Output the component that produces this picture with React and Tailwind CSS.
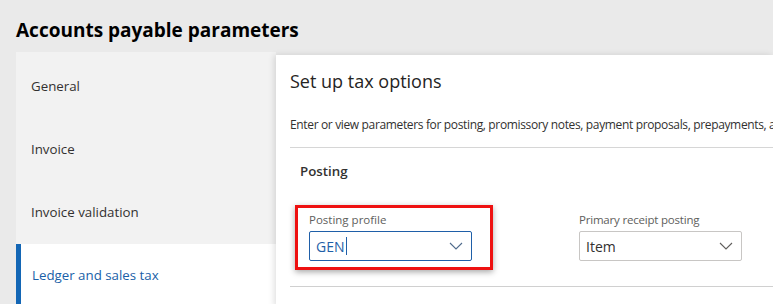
import React from "react";

function Chevron({ className }) {
  return (
    <svg width="14" height="8" viewBox="0 0 14 8" className={className} fill="none">
      <path d="M1 1 L7 7 L13 1" stroke="currentColor" strokeWidth="1.1" />
    </svg>
  );
}

export default function App() {
  const items = ["General", "Invoice", "Invoice validation"];
  return (
    <div className="w-[773px] h-[304px] bg-[#eaeaea] overflow-hidden font-['Open_Sans',sans-serif] text-[#323130]">
      <h1 className="h-[52px] pl-4 pt-[16px] text-[19px] leading-[28px] font-bold text-black">
        Accounts payable parameters
      </h1>
      <div className="flex">
        <nav className="w-[260px] ml-4 bg-[#f2f2f2] pt-[3px] shrink-0">
          {items.map((t) => (
            <div key={t} className="h-[63px] flex items-center pl-[15px] text-[13.3px] text-[#323130]">
              {t}
            </div>
          ))}
          <div className="h-[63px] flex items-center pl-[11px] border-l-[5px] border-[#1366b5] bg-white text-[13.3px] text-[#1a5fa8]">
            Ledger and sales tax
          </div>
        </nav>
        <main className="flex-1 min-w-0 mt-[3px] bg-white shadow-[-2px_0_6px_rgba(0,0,0,0.12)] pl-[14px] overflow-hidden">
          <div className="h-[52px] flex items-center text-[18px] text-[#252423]">Set up tax options</div>
          <div className="h-[40px] flex items-center pb-[4px] text-[12px] tracking-[-0.35px] whitespace-nowrap text-[#323130]">
            Enter or view parameters for posting, promissory notes, payment proposals, prepayments, and sales tax.
          </div>
          <div className="border-t border-[#d6d6d6]" />
          <div className="h-[46px] flex items-center pl-[10px] pt-[1px] text-[13.3px] font-semibold text-[#323130]">Posting</div>
          <div className="flex items-start h-[92px]">
            <div className="ml-[5px] mt-[11px] w-[198px] h-[65px] border-[3px] border-[#ee1111] shadow-[0_2px_6px_rgba(0,0,0,0.35)] pl-[11px] pt-[4px] shrink-0">
              <div className="text-[11.5px] leading-[16px] text-[#605e5c]">Posting profile</div>
              <div className="mt-[3px] w-[163px] h-[30px] border border-[#1f5fa8] rounded-[2px] flex items-center pl-[6px] pr-[8px]">
                <span className="text-[14px] text-[#1f5fa8]">GEN</span>
                <span className="w-px h-[18px] bg-[#1f5fa8] ml-[1px]" />
                <Chevron className="ml-auto text-[#4f6b8c]" />
              </div>
            </div>
            <div className="ml-[86px] mt-[14px] pt-[4px] shrink-0">
              <div className="text-[11.5px] leading-[16px] tracking-[-0.2px] text-[#605e5c]">Primary receipt posting</div>
              <div className="mt-[3px] w-[163px] h-[30px] border border-[#c8c6c4] rounded-[2px] flex items-center pl-[6px] pr-[8px]">
                <span className="text-[14px] text-[#323130]">Item</span>
                <Chevron className="ml-auto text-[#605e5c]" />
              </div>
            </div>
          </div>
          <div className="border-t border-[#d0d0d0]" />
        </main>
      </div>
    </div>
  );
}
